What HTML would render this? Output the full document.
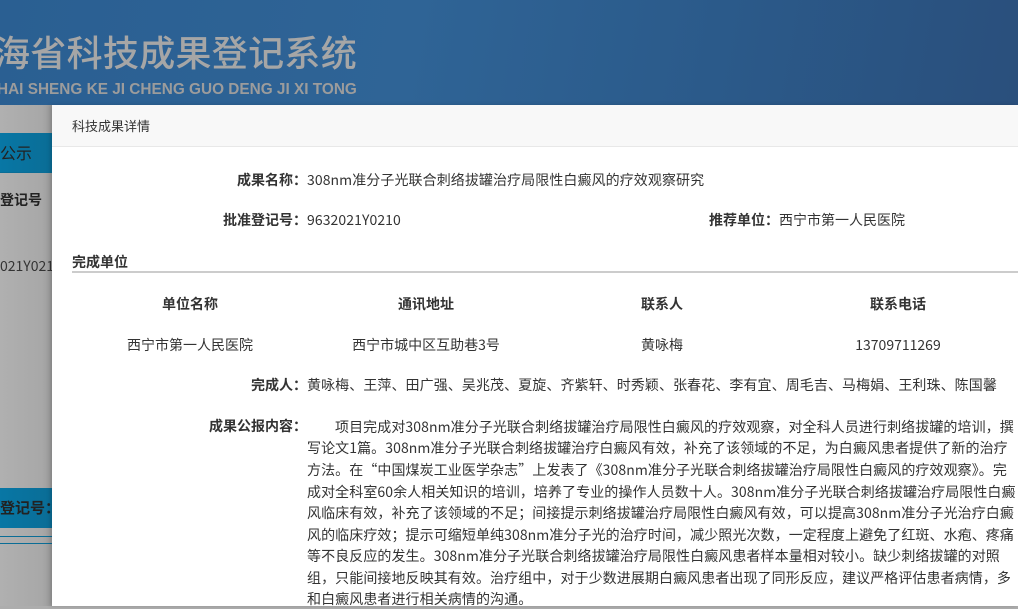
<!DOCTYPE html>
<html><head><meta charset="utf-8"><style>
*{margin:0;padding:0;box-sizing:border-box}
body{width:1018px;height:606px;overflow:hidden;position:relative;background:#adadad;font-family:"Noto Sans CJK SC","Liberation Sans",sans-serif;color:#333;font-size:14px}
.banner{position:absolute;left:0;top:0;width:1018px;height:105px;background:linear-gradient(100deg,#2a5f92 0%,#2f6496 40%,#2b5a8a 70%,#2a4f7c 100%)}
.t1{position:absolute;left:-6px;top:26px;font-size:36px;line-height:50px;color:#a6a6a6;letter-spacing:0.3px;white-space:nowrap;font-weight:500}
.t2{position:absolute;left:-3px;top:80px;font-size:16px;line-height:20px;color:#9c9c9c;font-weight:bold;white-space:nowrap;font-family:"Liberation Sans",sans-serif;transform:scaleX(0.96);transform-origin:left}
.lp{position:absolute;left:0;top:105px;width:52px;height:501px;background:linear-gradient(90deg,#b0b0b0,#a8a8a8 80%,#9a9a9a)}
.tab{position:absolute;left:0;width:52px;background:linear-gradient(90deg,#0877a5,#0a6d96);color:#222;font-size:15px;white-space:nowrap;overflow:hidden}
.modal{position:absolute;left:52px;top:105px;width:966px;height:501px;background:#fff;box-shadow:-2px 0 4px rgba(0,0,0,.15)}
.hd{height:42px;background:#f8f8f8;border-bottom:1px solid #e8e8e8;padding-left:20px;line-height:42px;font-size:13px;color:#333}
.a{position:absolute;white-space:nowrap;font-size:14px;line-height:20px}
b{font-weight:bold;color:#333}
.l{position:absolute;white-space:nowrap;font-size:14px;line-height:20px;font-weight:bold;text-align:right}
.p{position:absolute;left:255px;white-space:nowrap;font-size:14px;line-height:20px;color:#333;letter-spacing:0.08px}
</style></head><body>
<div class="banner"><div class="t1">海省科技成果登记系统</div><div class="t2">HAI SHENG KE JI CHENG GUO DENG JI XI TONG</div></div>
<div class="lp"></div>
<div class="tab" style="top:133px;height:39px;line-height:39px;font-size:16px">公示</div>
<div style="position:absolute;left:0;top:172px;width:52px;height:1px;background:#0a6d96"></div>
<div class="a" style="left:0;top:190px;font-weight:bold;color:#222">登记号</div>
<div class="a" style="left:0;top:256px;color:#333">021Y021</div>
<div class="tab" style="top:488px;height:40px;line-height:40px;font-weight:bold">登记号：</div>
<div style="position:absolute;left:0;top:536px;width:52px;height:1px;background:#0a6d96"></div>
<div style="position:absolute;left:0;top:543px;width:52px;height:1px;background:#0a6d96"></div>
<div class="modal">
<div class="hd">科技成果详情</div>
<div class="l" style="right:711px;top:65px">成果名称：</div>
<div class="p" style="top:65px">308nm准分子光联合刺络拔罐治疗局限性白癜风的疗效观察研究</div>
<div class="l" style="right:711px;top:105px">批准登记号：</div>
<div class="p" style="top:105px">9632021Y0210</div>
<div class="a" style="left:657px;top:105px"><b>推荐单位：</b>西宁市第一人民医院</div>
<div class="a" style="left:20px;top:147px;font-weight:bold">完成单位</div>
<div style="position:absolute;left:20px;top:166px;width:946px;height:2px;background:#ccc"></div>
<div class="a" style="left:20px;top:189px;width:944px;display:flex;font-weight:bold"><span style="flex:1;text-align:center">单位名称</span><span style="flex:1;text-align:center">通讯地址</span><span style="flex:1;text-align:center">联系人</span><span style="flex:1;text-align:center">联系电话</span></div>
<div class="a" style="left:20px;top:230px;width:944px;display:flex"><span style="flex:1;text-align:center">西宁市第一人民医院</span><span style="flex:1;text-align:center">西宁市城中区互助巷3号</span><span style="flex:1;text-align:center">黄咏梅</span><span style="flex:1;text-align:center">13709711269</span></div>
<div class="l" style="right:711px;top:270px">完成人：</div>
<div class="p" style="top:270px">黄咏梅、王萍、田广强、吴兆茂、夏旋、齐紫轩、时秀颖、张春花、李有宜、周毛吉、马梅娟、王利珠、陈国馨</div>
<div class="l" style="right:711px;top:311px">成果公报内容：</div>
<div class="p" style="top:312px;left:283px">项目完成对308nm准分子光联合刺络拔罐治疗局限性白癜风的疗效观察，对全科人员进行刺络拔罐的培训，撰</div>
<div class="p" style="top:333px">写论文1篇。308nm准分子光联合刺络拔罐治疗白癜风有效，补充了该领域的不足，为白癜风患者提供了新的治疗</div>
<div class="p" style="top:355px">方法。在“中国煤炭工业医学杂志”上发表了《308nm准分子光联合刺络拔罐治疗局限性白癜风的疗效观察》。完</div>
<div class="p" style="top:377px">成对全科室60余人相关知识的培训，培养了专业的操作人员数十人。308nm准分子光联合刺络拔罐治疗局限性白癜</div>
<div class="p" style="top:398px">风临床有效，补充了该领域的不足；间接提示刺络拔罐治疗局限性白癜风有效，可以提高308nm准分子光治疗白癜</div>
<div class="p" style="top:420px">风的临床疗效；提示可缩短单纯308nm准分子光的治疗时间，减少照光次数，一定程度上避免了红斑、水疱、疼痛</div>
<div class="p" style="top:441px">等不良反应的发生。308nm准分子光联合刺络拔罐治疗局限性白癜风患者样本量相对较小。缺少刺络拔罐的对照</div>
<div class="p" style="top:463px">组，只能间接地反映其有效。治疗组中，对于少数进展期白癜风患者出现了同形反应，建议严格评估患者病情，多</div>
<div class="p" style="top:484px">和白癜风患者进行相关病情的沟通。</div>
</div>
</body></html>
